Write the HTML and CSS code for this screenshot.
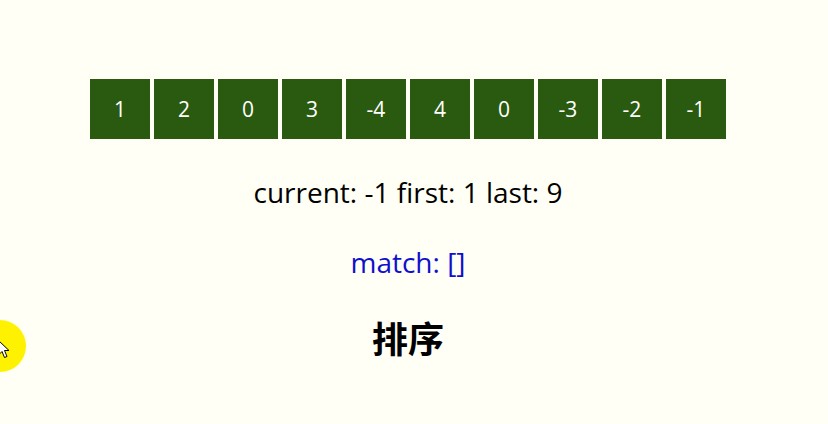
FILE: index.html
```html
<!DOCTYPE html>
<html>
<head>
<meta charset="utf-8">
<link rel="stylesheet" href="styles.css">
</head>
<body>
<div class="page">
  <div class="row">
    <div class="cell">1</div>
    <div class="cell">2</div>
    <div class="cell">0</div>
    <div class="cell">3</div>
    <div class="cell">-4</div>
    <div class="cell">4</div>
    <div class="cell">0</div>
    <div class="cell">-3</div>
    <div class="cell">-2</div>
    <div class="cell">-1</div>
  </div>
  <p class="status">current: -1 first: 1 last: 9</p>
  <p class="match">match: []</p>
  <h2 class="title">排序</h2>
</div>
<div class="cursor">
  <svg width="14" height="20" viewBox="0 0 14 20"><path d="M0.5 0.5 L0.5 15 L4 11.5 L6.5 17.5 L9 16.5 L6.5 10.5 L11 10.5 Z" fill="#fff" stroke="#000" stroke-width="1"/></svg>
</div>
</body>
</html>
```
FILE: styles.css
```css
html, body {
  margin: 0;
  padding: 0;
  background: #fffff6;
  overflow: hidden;
}
body {
  width: 828px;
  height: 424px;
  position: relative;
  font-family: "Open Sans", "Noto Sans", "Noto Sans CJK SC", sans-serif;
}
.page {
  width: 816px;
  display: flex;
  flex-direction: column;
  align-items: center;
  padding-top: 79px;
}
.row {
  display: flex;
  gap: 4px;
}
.cell {
  width: 60px;
  height: 60px;
  background: #2a5a10;
  color: #fff;
  font-size: 21px;
  display: flex;
  align-items: center;
  justify-content: center;
}
.status {
  margin: 34px 0 0;
  font-size: 28px;
  line-height: 38px;
  color: #000;
}
.match {
  margin: 32px 0 0;
  font-size: 28px;
  line-height: 38px;
  color: #1010cc;
}
.title {
  margin: 34px 0 0;
  font-family: "Noto Sans CJK SC", sans-serif;
  font-size: 36px;
  line-height: 44px;
  font-weight: 700;
}
.cursor {
  position: absolute;
  left: -26px;
  top: 320px;
  width: 52px;
  height: 52px;
  border-radius: 50%;
  background: #fff200;
}
.cursor svg {
  position: absolute;
  left: 24px;
  top: 20px;
}
```
